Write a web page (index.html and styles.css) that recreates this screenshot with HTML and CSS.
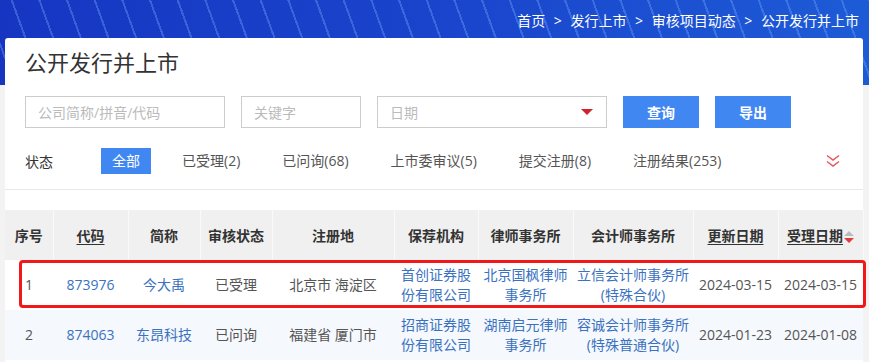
FILE: index.html
```html
<!DOCTYPE html>
<html lang="zh-CN">
<head>
    <meta charset="UTF-8">
    <meta name="viewport" content="width=device-width, initial-scale=1.0">
    <title>公开发行并上市</title>
    <link rel="stylesheet" href="styles.css">
</head>
<body>
    <div class="banner">
        <div class="crumbs">首页 &gt; 发行上市 &gt; 审核项目动态 &gt; 公开发行并上市</div>
    </div>

    <div class="card">
        <div class="filters">
            <h1>公开发行并上市</h1>
            <div class="search-row">
                <input type="text" class="in-company" placeholder="公司简称/拼音/代码">
                <input type="text" class="in-key" placeholder="关键字">
                <div class="in-date">
                    <span>日期</span>
                    <i class="caret"></i>
                </div>
                <button type="button" class="btn">查询</button>
                <button type="button" class="btn">导出</button>
            </div>
            <div class="status-row">
                <span class="status-label">状态</span>
                <span class="status-item active">全部</span>
                <span class="status-item">已受理(2)</span>
                <span class="status-item">已问询(68)</span>
                <span class="status-item">上市委审议(5)</span>
                <span class="status-item">提交注册(8)</span>
                <span class="status-item">注册结果(253)</span>
                <svg class="more" width="14" height="14" viewBox="0 0 14 14">
                    <polyline points="1,1.5 7,6 13,1.5" fill="none" stroke="#e5545a" stroke-width="1.4"/>
                    <polyline points="1,7.5 7,12 13,7.5" fill="none" stroke="#e5545a" stroke-width="1.4"/>
                </svg>
            </div>
        </div>

        <div class="table-wrap">
            <table>
                <colgroup>
                    <col style="width:48px"><col style="width:75px"><col style="width:72px"><col style="width:72px">
                    <col style="width:122px"><col style="width:84px"><col style="width:95px"><col style="width:120px">
                    <col style="width:85px"><col style="width:85px">
                </colgroup>
                <thead>
                    <tr>
                        <th>序号</th>
                        <th><u>代码</u></th>
                        <th>简称</th>
                        <th>审核状态</th>
                        <th>注册地</th>
                        <th>保荐机构</th>
                        <th>律师事务所</th>
                        <th>会计师事务所</th>
                        <th><u>更新日期</u></th>
                        <th class="sorted"><u>受理日期</u><span class="sort"><i class="up"></i><i class="down"></i></span></th>
                    </tr>
                </thead>
                <tbody>
                    <tr>
                        <td>1</td>
                        <td class="link">873976</td>
                        <td class="link">今大禹</td>
                        <td>已受理</td>
                        <td>北京市 海淀区</td>
                        <td class="link">首创证券股份有限公司</td>
                        <td class="link">北京国枫律师事务所</td>
                        <td class="link">立信会计师事务所(特殊合伙)</td>
                        <td>2024-03-15</td>
                        <td>2024-03-15</td>
                    </tr>
                    <tr class="alt">
                        <td>2</td>
                        <td class="link">874063</td>
                        <td class="link">东昂科技</td>
                        <td>已问询</td>
                        <td>福建省 厦门市</td>
                        <td class="link">招商证券股份有限公司</td>
                        <td class="link">湖南启元律师事务所</td>
                        <td class="link">容诚会计师事务所(特殊普通合伙)</td>
                        <td>2024-01-23</td>
                        <td>2024-01-08</td>
                    </tr>
                </tbody>
            </table>
            <div class="highlight"></div>
        </div>
    </div>
</body>
</html>
```

FILE: styles.css
```css
body {
    margin: 0;
    background: #f3f3f3;
    font-family: "Open Sans", "Noto Sans CJK SC", sans-serif;
    color: #333;
    overflow: hidden;
}
.banner {
    height: 85px;
    background:
        repeating-linear-gradient(70deg, rgba(120, 170, 255, 0) 0 13px, rgba(120, 170, 255, 0.35) 13px 15px, rgba(120, 170, 255, 0) 15px 26px),
        linear-gradient(90deg, #1636c2 0%, #1a44cc 50%, #1d5bd6 100%);
}
.crumbs {
    text-align: right;
    color: #fff;
    font-size: 14px;
    line-height: 20px;
    padding: 11px 10px 0 0;
    word-spacing: 5px;
}
.card {
    background: #fff;
    margin: -47px 6px 0 5px;
    border-radius: 3px 3px 0 0;
    height: 330px;
}
.filters {
    padding: 9px 20px 0;
    border-bottom: 1px solid #e8e8e8;
}
h1 {
    margin: 0;
    font-size: 22px;
    font-weight: normal;
    line-height: 30px;
    color: #333;
}
.search-row {
    display: flex;
    gap: 16px;
    margin-top: 19px;
}
.search-row input, .in-date {
    height: 32px;
    box-sizing: border-box;
    border: 1px solid #ccc;
    padding: 0 12px;
    font-family: inherit;
    font-size: 14px;
    outline: none;
}
.search-row input::placeholder {
    color: #bbb;
}
.in-company {
    width: 200px;
}
.in-key {
    width: 120px;
}
.in-date {
    width: 230px;
    display: flex;
    align-items: center;
    justify-content: space-between;
    color: #bbb;
}
.caret {
    width: 0;
    height: 0;
    border-left: 6px solid transparent;
    border-right: 6px solid transparent;
    border-top: 6px solid #d0232c;
    margin-right: 1px;
}
.btn {
    width: 76px;
    height: 32px;
    border: none;
    background: #4187f2;
    color: #fff;
    font-family: inherit;
    font-size: 14px;
    font-weight: bold;
    cursor: pointer;
}
.status-row {
    display: flex;
    align-items: center;
    margin-top: 20px;
    padding-bottom: 15px;
    font-size: 14px;
    color: #555;
}
.status-label {
    width: 76px;
    color: #333;
}
.status-item {
    padding: 0 11px;
    margin-right: 20px;
    line-height: 26px;
    cursor: pointer;
}
.status-item.active {
    background: #4187f2;
    color: #fff;
}
.more {
    margin-left: auto;
    margin-right: 3px;
}
.table-wrap {
    position: relative;
    margin-top: 20px;
}
table {
    border-collapse: collapse;
    table-layout: fixed;
    width: 858px;
    font-size: 14px;
}
th {
    height: 50px;
    background: #f0f0f0;
    color: #333;
    font-weight: bold;
    border-right: 1px solid #fafafa;
    padding: 0;
}
th u {
    text-underline-offset: 3px;
}
.sorted {
    white-space: nowrap;
}
.sort {
    display: inline-flex;
    flex-direction: column;
    gap: 2px;
    vertical-align: middle;
    margin-left: 1px;
}
.sort .up {
    border-left: 5px solid transparent;
    border-right: 5px solid transparent;
    border-bottom: 5px solid #bbb;
}
.sort .down {
    border-left: 5px solid transparent;
    border-right: 5px solid transparent;
    border-top: 5px solid #e23a3a;
}
td {
    height: 50px;
    text-align: center;
    color: #555;
    line-height: 20px;
    padding: 0 3px;
}
td.link {
    color: #3a72c0;
}
tr.alt td {
    background: #f5f8fc;
}
.highlight {
    position: absolute;
    left: 14px;
    top: 50px;
    width: 841px;
    height: 42px;
    border: 3px solid #f01818;
    border-radius: 4px;
}
```
